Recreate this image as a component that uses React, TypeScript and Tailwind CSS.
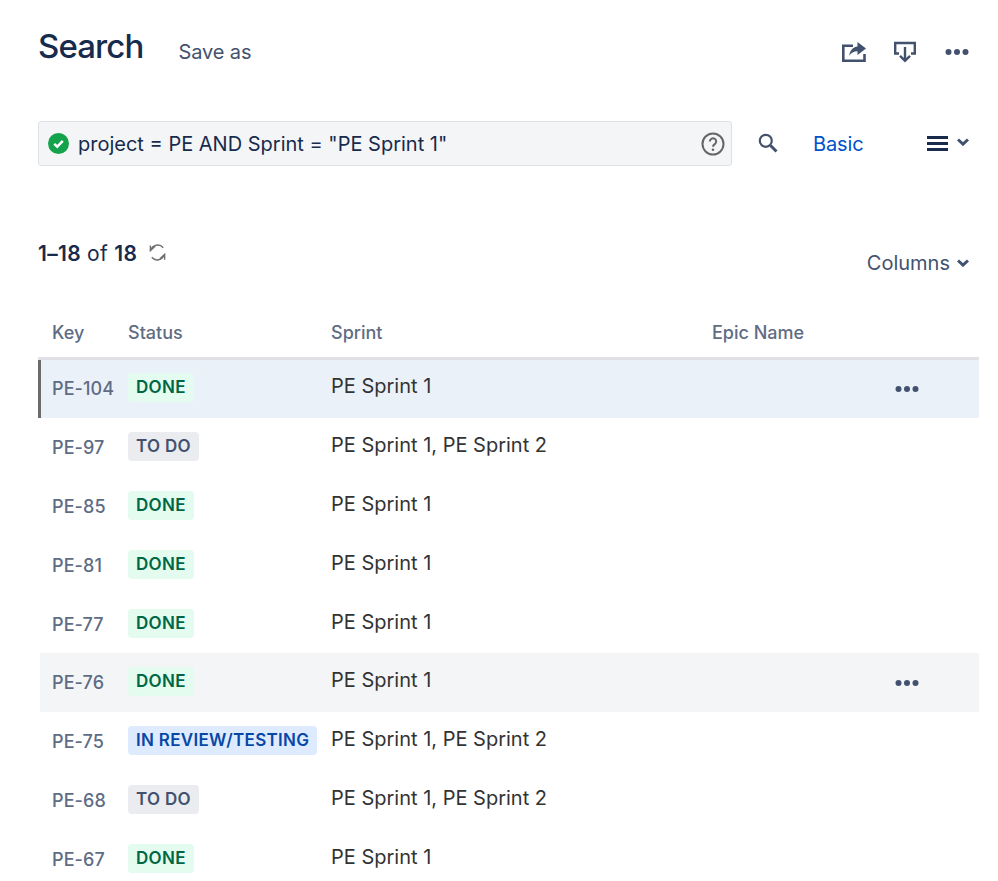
type Status = 'DONE' | 'TO DO' | 'IN REVIEW/TESTING';

interface Issue {
  key: string;
  status: Status;
  sprint: string;
  actions?: boolean;
  rowClass?: string;
}

const issues: Issue[] = [
  { key: 'PE-104', status: 'DONE', sprint: 'PE Sprint 1', actions: true, rowClass: 'pl-[11px] border-l-[3px] border-[#6b6b6b] bg-[#ebf1f8]' },
  { key: 'PE-97', status: 'TO DO', sprint: 'PE Sprint 1, PE Sprint 2' },
  { key: 'PE-85', status: 'DONE', sprint: 'PE Sprint 1' },
  { key: 'PE-81', status: 'DONE', sprint: 'PE Sprint 1' },
  { key: 'PE-77', status: 'DONE', sprint: 'PE Sprint 1' },
  { key: 'PE-76', status: 'DONE', sprint: 'PE Sprint 1', actions: true, rowClass: 'ml-[2px] pl-[12px] bg-[#f4f5f7]' },
  { key: 'PE-75', status: 'IN REVIEW/TESTING', sprint: 'PE Sprint 1, PE Sprint 2' },
  { key: 'PE-68', status: 'TO DO', sprint: 'PE Sprint 1, PE Sprint 2' },
  { key: 'PE-67', status: 'DONE', sprint: 'PE Sprint 1' },
];

const lozenge: Record<Status, string> = {
  DONE: 'bg-[#e3fcef] text-[#006644]',
  'TO DO': 'bg-[#ebecf0] text-[#42526e]',
  'IN REVIEW/TESTING': 'bg-[#deebff] text-[#0747a6]',
};

function Dots({ className }: { className: string }) {
  return (
    <svg viewBox="0 0 24 6" className={className} fill="#42526e">
      <circle cx="3.5" cy="3" r="3" />
      <circle cx="12" cy="3" r="3" />
      <circle cx="20.5" cy="3" r="3" />
    </svg>
  );
}

function Chevron({ className }: { className: string }) {
  return (
    <svg viewBox="0 0 12 8" className={className} fill="none" stroke="#42526e" strokeWidth="3">
      <path d="M1 1.500l5 4.600 5-4.600" />
    </svg>
  );
}

export default function App() {
  return (
    <div className="w-[998px] h-[881px] overflow-hidden bg-white pl-[38px] pr-[19px] font-['Inter',sans-serif]">
      {/* Header */}
      <div className="flex items-center h-[94px] pr-[10px]">
        <h1 className="text-[33px] font-medium tracking-[-0.9px] text-[#172b4d]">Search</h1>
        <span className="ml-[35px] mt-[10px] text-[20px] tracking-[-0.1px] text-[#42526e]">Save as</span>
        <div className="ml-auto mt-[10px] flex items-center">
          <svg viewBox="0 0 24 20" className="w-[24px] h-[20px]" fill="#42526e">
            <path d="M0 2.5h11v2.6H2.6v12.3h18.6V12h2.6v8H0z" />
            <path d="M15.5 0l8.5 6.6-8.500 6.400V9.200c-3.600 0-6.400 1.500-8.300 4.600.600-5 3.600-8.600 8.300-9.200z" />
          </svg>
          <svg viewBox="0 0 22 22" className="ml-[28px] w-[22px] h-[22px]" fill="none" stroke="#42526e" strokeWidth="2.4">
            <path d="M5 12.500H1.200V2h19.600v10.500H17" />
            <path d="M11 6v13.500M6 14.800l5 5 5-5" />
          </svg>
          <Dots className="ml-[29px] w-[24px] h-[6px]" />
        </div>
      </div>

      {/* JQL bar */}
      <div className="flex items-center mt-[27px] pr-[10px]">
        <div className="flex items-center w-[694px] h-[45px] rounded-[3px] border border-[#dfe1e6] bg-[#f4f5f7] pl-[9px] pr-[6px]">
          <svg viewBox="0 0 22 22" className="w-[21px] h-[21px] shrink-0">
            <circle cx="11" cy="11" r="11" fill="#14a24b" />
            <path d="M6.500 11.300l3.200 3 5.800-6" fill="none" stroke="#fff" strokeWidth="2.600" />
          </svg>
          <span className="ml-[9px] text-[20px] text-[#172b4d]">project = PE AND Sprint = "PE Sprint 1"</span>
          <svg viewBox="0 0 24 24" className="ml-auto w-[24px] h-[24px]" fill="none">
            <circle cx="12" cy="12" r="10.500" stroke="#666" strokeWidth="2" />
            <path d="M8.800 9.500a3.200 3.200 0 1 1 5 2.700c-1.200.8-1.800 1.400-1.800 2.600" stroke="#666" strokeWidth="2" />
            <circle cx="12" cy="17.800" r="1.300" fill="#666" />
          </svg>
        </div>
        <svg viewBox="0 0 20 20" className="ml-[26px] w-[20px] h-[20px] mb-[1px]" fill="none" stroke="#42526e">
          <circle cx="7.800" cy="7.800" r="6" strokeWidth="2.200" />
          <path d="M12.500 12.500l6 6" strokeWidth="3" />
        </svg>
        <span className="ml-[35px] text-[20px] tracking-[-0.1px] text-[#0052cc]">Basic</span>
        <div className="ml-auto flex items-center">
          <svg viewBox="0 0 21 15" className="w-[21px] h-[15px]" fill="#172b4d">
            <rect width="21" height="3" />
            <rect y="6" width="21" height="3" />
            <rect y="12" width="21" height="3" />
          </svg>
          <Chevron className="ml-[9px] w-[12px] h-[8px] mb-[3px]" />
        </div>
      </div>

      {/* Result count */}
      <div className="flex items-start justify-between mt-[74px] pr-[10px]">
        <div className="flex items-center text-[21px] tracking-[0.35px] text-[#172b4d] h-[28px]">
          <span className="font-semibold">1–18</span>
          <span className="ml-[6px]">of</span>
          <span className="ml-[6px] font-semibold">18</span>
          <svg viewBox="0 0 20 20" className="ml-[11px] mb-[3px] w-[19px] h-[19px]" fill="none" stroke="#707070" strokeWidth="1.500">
            <path d="M3 7.500A7.500 7.500 0 0 1 16 5" />
            <path d="M7.500 3.500L2.500 8V2.500" />
            <path d="M17 12.500A7.500 7.500 0 0 1 4 15" />
            <path d="M12.500 16.500l5-4.500v5.500" />
          </svg>
        </div>
        <div className="flex items-center mt-[8px]">
          <span className="text-[20px] text-[#42526e]">Columns</span>
          <Chevron className="ml-[7px] w-[12px] h-[8px]" />
        </div>
      </div>

      {/* Table */}
      <div className="mt-[31px]">
        <div className="flex items-center h-[47.5px] pl-[14px] border-b-[3px] border-[#dfe1e6] text-[18px] font-medium text-[#5e6c84] box-content">
          <div className="w-[76px]">Key</div>
          <div className="w-[203px]">Status</div>
          <div className="w-[381px]">Sprint</div>
          <div>Epic Name</div>
        </div>
        {issues.map((issue) => (
          <div key={issue.key} className={`flex items-center h-[58.8px] ${issue.rowClass ?? 'pl-[14px]'}`}>
            <div className="w-[76px] text-[18px] font-medium tracking-[0.1px] text-[#5e6c84]">{issue.key}</div>
            <div className="w-[203px] -mt-[2px]">
              <span className={`inline-block h-[29px] leading-[29px] rounded-[4px] px-[8px] text-[17px] font-semibold tracking-[0.3px] ${lozenge[issue.status]}`}>
                {issue.status}
              </span>
            </div>
            <div className="w-[564px] -mt-[5px] text-[20px] text-[#333]">{issue.sprint}</div>
            {issue.actions && <Dots className="w-[24px] h-[6px]" />}
          </div>
        ))}
      </div>
    </div>
  );
}
